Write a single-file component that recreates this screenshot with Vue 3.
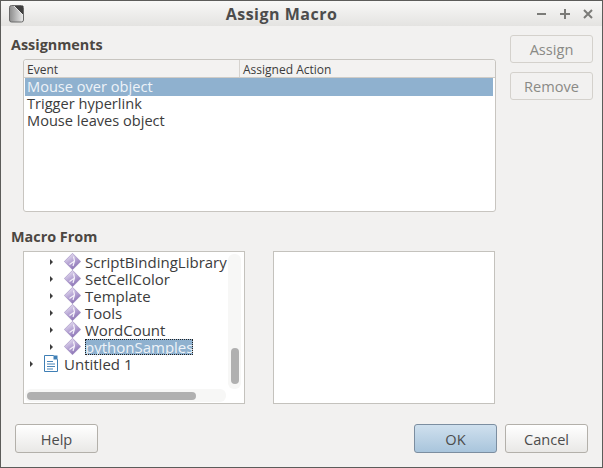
<template>
  <div class="dialog">
    <header class="titlebar">
      <svg class="app-icon" width="16" height="18" viewBox="0 0 16 18">
        <defs>
          <linearGradient id="docFill" x1="0" y1="0" x2="1" y2="0">
            <stop offset="0" stop-color="#8c8c8c" />
            <stop offset="1" stop-color="#ececec" />
          </linearGradient>
        </defs>
        <rect x="0.5" y="0.5" width="14" height="16.5" rx="2" fill="url(#docFill)" stroke="#6a6a6a" />
        <path d="M5 1H14V10Z" fill="#3f3f3f" />
        <path d="M5 1L14 10" stroke="#fff" stroke-width="0.8" />
      </svg>
      <span class="title">Assign Macro</span>
      <div class="window-btns">
        <svg width="10" height="10" viewBox="0 0 10 10"><path d="M0 5H9" stroke="#7b7b78" stroke-width="2" /></svg>
        <svg width="10" height="10" viewBox="0 0 10 10"><path d="M0 5H10M5 0V10" stroke="#7b7b78" stroke-width="2" /></svg>
        <svg width="10" height="10" viewBox="0 0 10 10"><path d="M1 1L9 9M9 1L1 9" stroke="#7b7b78" stroke-width="2" /></svg>
      </div>
    </header>

    <div class="body">
      <div class="top">
        <section class="assignments">
          <h2>Assignments</h2>
          <div class="event-list">
            <div class="list-head">
              <span class="col-event">Event</span>
              <span class="col-action">Assigned Action</span>
            </div>
            <div
              v-for="(ev, i) in events"
              :key="ev"
              class="event-row"
              :class="{ selected: i === 0 }"
            >{{ ev }}</div>
          </div>
        </section>
        <div class="side-btns">
          <button class="btn disabled">Assign</button>
          <button class="btn disabled">Remove</button>
        </div>
      </div>

      <h2 class="macro-title">Macro From</h2>
      <div class="macro-row">
        <div class="tree-box">
          <div class="tree-view">
            <ul class="tree">
              <li v-for="lib in libraries" :key="lib" class="tree-row">
                <span class="arrow"></span>
                <svg class="lib-icon" width="17" height="17" viewBox="0 0 17 17">
                  <defs>
                    <linearGradient id="gem" x1="0.2" y1="0" x2="0.8" y2="1">
                      <stop offset="0" stop-color="#efeaf6" />
                      <stop offset="0.45" stop-color="#b9a8d6" />
                      <stop offset="1" stop-color="#7f65ac" />
                    </linearGradient>
                  </defs>
                  <path d="M8.5 0.3L16.7 8.5L8.5 16.7L0.3 8.5Z" fill="url(#gem)" stroke="#9a86bd" stroke-width="0.6" />
                  <path d="M9.5 3.5L10.5 8L9 13M10.5 8L5.5 11.5" fill="none" stroke="#f4f1f9" stroke-width="1.2" />
                </svg>
                <span class="tree-label" :class="{ current: lib === 'pythonSamples' }">{{ lib }}</span>
              </li>
              <li class="tree-row root">
                <span class="arrow"></span>
                <svg class="doc-icon" width="14" height="17" viewBox="0 0 14 17">
                  <path d="M0.5 0.5H9.5L13.5 4.5V16.5H0.5Z" fill="#fff" stroke="#3f7fb5" />
                  <path d="M9.5 0.5H13.5V4.5H9.5Z" fill="#3f7fb5" />
                  <path d="M3 6.5H9M3 9H11M3 11.5H11M3 14H9" stroke="#4a85b8" />
                </svg>
                <span class="tree-label">Untitled 1</span>
              </li>
            </ul>
            <div class="vscroll"><div class="vthumb"></div></div>
          </div>
          <div class="hscroll"><div class="hthumb"></div></div>
        </div>
        <div class="macro-list"></div>
      </div>

      <footer class="footer">
        <button class="btn">Help</button>
        <div class="footer-right">
          <button class="btn primary">OK</button>
          <button class="btn">Cancel</button>
        </div>
      </footer>
    </div>
  </div>
</template>

<script setup>
const events = ['Mouse over object', 'Trigger hyperlink', 'Mouse leaves object']
const libraries = ['ScriptBindingLibrary', 'SetCellColor', 'Template', 'Tools', 'WordCount', 'pythonSamples']
</script>

<style>
html, body {
  margin: 0;
  background: #f2f1f0;
}
</style>

<style scoped>
.dialog {
  box-sizing: border-box;
  width: 603px;
  height: 468px;
  display: flex;
  flex-direction: column;
  background: #f2f1f0;
  border: 1px solid #5c5c5a;
  font-family: "Open Sans", "Noto Sans", sans-serif;
  font-size: 14px;
  color: #3c3c3c;
  overflow: hidden;
}

.titlebar {
  position: relative;
  height: 25px;
  flex: none;
  display: flex;
  align-items: center;
  justify-content: space-between;
  padding: 0 9px 0 8px;
  background: linear-gradient(#f8f8f7, #e4e3e1);
}

.app-icon {
  margin-top: 1px;
}

.title {
  position: absolute;
  left: 0;
  right: 40px;
  text-align: center;
  font-weight: 700;
  font-size: 16px;
  letter-spacing: 0.5px;
  color: #4c4c4c;
  pointer-events: none;
}

.window-btns {
  display: flex;
  gap: 13px;
  align-items: center;
}

.body {
  flex: 1;
  padding: 9px 9px 0 10px;
  display: flex;
  flex-direction: column;
}

.top {
  display: flex;
}

h2 {
  margin: 0;
  font-size: 14.4px;
  line-height: 20px;
  font-weight: 700;
  color: #4c4742;
}

.assignments {
  width: 485px;
}

.event-list {
  box-sizing: border-box;
  width: 473px;
  height: 153px;
  margin: 4px 0 0 12px;
  padding: 0 1px;
  background: #fff;
  border: 1px solid #c8c5c0;
  border-radius: 3px;
  line-height: 17px;
  color: #3c3c3c;
}

.list-head {
  display: flex;
  height: 18px;
  margin: 0 -1px;
  font-size: 12px;
  line-height: 19px;
  background: #f3f2f1;
  border-bottom: 1px solid #cfccc7;
  box-sizing: border-box;
  border-radius: 3px 3px 0 0;
}

.col-event {
  box-sizing: border-box;
  width: 216px;
  padding-left: 3px;
  border-right: 1px solid #d6d3cf;
}

.col-action {
  padding-left: 3px;
}

.event-row {
  height: 17px;
  line-height: 15px;
  padding-left: 2px;
  font-size: 14.6px;
  color: #3c3c3c;
}

.event-row.selected {
  height: 18px;
  line-height: 17px;
  margin-right: 1px;
  background: #8fb1cf;
  color: #eef3f8;
}

.side-btns {
  display: flex;
  flex-direction: column;
  gap: 9px;
  margin-left: 14px;
}

.btn {
  box-sizing: border-box;
  width: 83px;
  height: 29px;
  padding: 0;
  border: 1px solid #b3b0aa;
  border-radius: 3px;
  background: linear-gradient(#ffffff, #e9e8e6);
  font-family: inherit;
  font-size: 14.6px;
  color: #4c4c4c;
}

.btn.disabled {
  height: 28px;
  background: #f2f1f0;
  border-color: #d4d1cc;
  color: #8a8a86;
}

.btn.primary {
  background: linear-gradient(#cfe0ee, #a9c5dc);
  border-color: #7c8ea0;
}

.macro-title {
  margin-top: 15px;
}

.macro-row {
  display: flex;
  gap: 28px;
  margin: 4px 0 0 12px;
}

.tree-box,
.macro-list {
  box-sizing: border-box;
  width: 222px;
  height: 153px;
  background: #fff;
  border: 1px solid #c4c2bd;
}

.tree-box {
  display: flex;
  flex-direction: column;
  padding: 1px 3px 1px 1px;
}

.tree-view {
  flex: 1;
  display: flex;
  min-height: 0;
}

.tree {
  flex: 1;
  min-width: 0;
  list-style: none;
  margin: 0;
  padding: 0 0 0 1px;
  overflow: hidden;
}

.tree-row {
  display: flex;
  align-items: center;
  height: 17px;
  line-height: 16px;
  padding-left: 24px;
  white-space: nowrap;
  color: #3c3c3c;
}

.tree-row.root {
  padding-left: 4px;
}

.arrow {
  flex: none;
  width: 0;
  height: 0;
  margin-right: 11px;
  border-left: 3px solid #3c3c3c;
  border-top: 3px solid transparent;
  border-bottom: 3px solid transparent;
}

.lib-icon {
  flex: none;
  margin-right: 4px;
}

.doc-icon {
  flex: none;
  margin-right: 6px;
}

.tree-label {
  font-size: 15px;
}

.tree-label.current {
  background: #8fb1cf;
  color: #eef3f8;
  outline: 1px dotted #222;
  outline-offset: -1px;
}

.vscroll {
  flex: none;
  box-sizing: border-box;
  width: 13px;
  margin-top: 1px;
  padding-top: 94px;
  display: flex;
  justify-content: center;
  background: #f7f7f6;
  border-radius: 6px;
}

.vthumb {
  width: 8px;
  height: 36px;
  border-radius: 4px;
  background: #b0b0b0;
}

.hscroll {
  flex: none;
  box-sizing: border-box;
  height: 13px;
  margin-right: 15px;
  padding: 3px 30px 2px 2px;
  background: #f7f7f6;
  border-radius: 6px;
}

.hthumb {
  height: 8px;
  border-radius: 4px;
  background: #b0b0b0;
}

.footer {
  display: flex;
  justify-content: space-between;
  margin: 20px 5px 0 4px;
}

.footer-right {
  display: flex;
  gap: 8px;
}
</style>
